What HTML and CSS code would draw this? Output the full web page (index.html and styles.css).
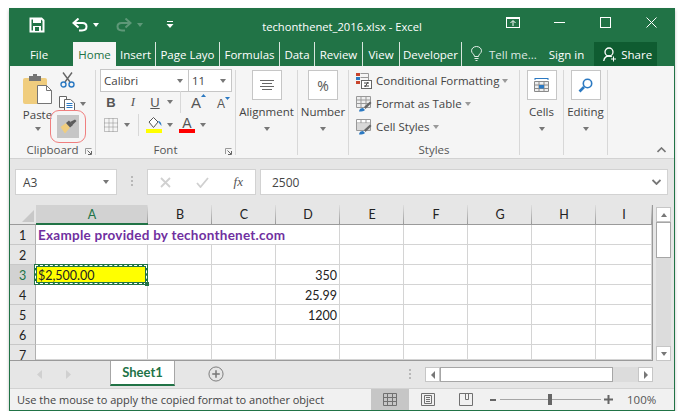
FILE: index.html
```html
<!DOCTYPE html>
<html>
<head>
    <title>techonthenet_2016.xlsx - Excel</title>
    <link rel="stylesheet" href="styles.css">
</head>
<body>
<div class="window">
    <!-- Title bar -->
    <div class="titlebar">
        <div class="qat">
            <svg class="qat-save" width="16" height="16" viewBox="0 0 16 16"><path d="M1.500 1.500H12.500L14.500 3.500V14.500H1.500Z" fill="none" stroke="#fff" stroke-width="2"/><rect x="4" y="2" width="8" height="4" fill="#fff"/><rect x="4" y="9" width="8" height="5" fill="#fff"/><rect x="6" y="10" width="4" height="4" fill="#217346"/></svg>
            <svg class="qat-undo" width="16" height="14" viewBox="0 0 16 14"><path d="M2 5H10.500C13 5 14.500 6.600 14.500 8.600C14.500 10.600 13 12.500 10 12.500H7" fill="none" stroke="#fff" stroke-width="2"/><path d="M6.500 0.500L1.500 5L6.500 9.500" fill="none" stroke="#fff" stroke-width="2"/></svg>
            <span class="tri tri-white qat-drop"></span>
            <svg class="qat-redo" width="16" height="14" viewBox="0 0 16 14"><path d="M14 5H5.500C3 5 1.500 6.600 1.500 8.600C1.500 10.600 3 12.500 6 12.500H9" fill="none" stroke="#5e9878" stroke-width="2"/><path d="M9.500 0.500L14.500 5L9.500 9.500" fill="none" stroke="#5e9878" stroke-width="2"/></svg>
            <span class="tri tri-dim qat-drop2"></span>
            <svg class="qat-custom" width="8" height="8" viewBox="0 0 8 8"><rect x="1" y="0" width="6" height="1" fill="#fff"/><path d="M0.500 3H7.500L4 7Z" fill="#fff"/></svg>
        </div>
        <div class="doc-title">techonthenet_2016.xlsx - Excel</div>
        <div class="win-controls">
            <span class="win-btn"><svg width="14" height="11" viewBox="0 0 14 11"><rect x="0.500" y="0.500" width="13" height="10" fill="none" stroke="#fff"/><rect x="0" y="0" width="14" height="2" fill="#fff"/><path d="M7 9V4M4.500 6L7 3.500L9.500 6" fill="none" stroke="#fff"/></svg></span>
            <span class="win-btn"><svg width="11" height="2" viewBox="0 0 11 2"><rect width="11" height="1" fill="#fff"/></svg></span>
            <span class="win-btn"><svg width="11" height="11" viewBox="0 0 11 11"><rect x="0.500" y="0.500" width="10" height="10" fill="none" stroke="#fff"/></svg></span>
            <span class="win-btn"><svg width="11" height="11" viewBox="0 0 11 11"><path d="M0.500 0.500L10.500 10.500M10.500 0.500L0.500 10.500" stroke="#fff"/></svg></span>
        </div>
    </div>

    <!-- Tabs -->
    <div class="tabs">
        <span class="tab tab-file">File</span>
        <span class="tab tab-home">Home</span>
        <span class="tab tab-sep w40">Insert</span>
        <span class="tab tab-sep w64">Page Layo</span>
        <span class="tab tab-sep w60">Formulas</span>
        <span class="tab tab-sep w35">Data</span>
        <span class="tab tab-sep w48">Review</span>
        <span class="tab tab-sep w37">View</span>
        <span class="tab tab-sep w62">Developer</span>
        <svg class="bulb" width="11" height="15" viewBox="0 0 11 15"><path d="M3.500 10.500C3.500 8 0.500 7.500 0.500 4.800C0.500 2.300 2.800 0.500 5.500 0.500C8.200 0.500 10.500 2.300 10.500 4.800C10.500 7.500 7.500 8 7.500 10.500ZM3.500 12.500H7.500M4.500 14.500H6.500" fill="none" stroke="#e4eee8"/></svg>
        <span class="tell">Tell me...</span>
        <span class="signin">Sign in</span>
        <span class="share">
            <svg width="14" height="15" viewBox="0 0 14 15"><circle cx="6" cy="5" r="4" fill="none" stroke="#fff" stroke-width="1.300"/><path d="M0.700 14C1.200 11 3 9 6 9C7 9 8 9.300 8.800 9.800" fill="none" stroke="#fff" stroke-width="1.300"/><path d="M10.500 9.500V14.500M8 12H13" stroke="#fff"/></svg>
            Share
        </span>
    </div>

    <!-- Ribbon -->
    <div class="ribbon">
        <div class="group g-clip">
            <div class="group-body clip-body">
                <div class="paste">
                    <svg width="29" height="30" viewBox="0 0 29 30"><rect x="0" y="4" width="24" height="26" rx="2" fill="#f0cd7e"/><rect x="6" y="2" width="12" height="5" fill="#757575"/><rect x="10" y="0" width="4" height="3" fill="#757575"/><path d="M14.500 11.500H23.500L28.500 16.500V29.500H14.500Z" fill="#fff" stroke="#757575"/><path d="M23.500 11.500V16.500H28.500" fill="none" stroke="#757575"/></svg>
                    <span class="big-label">Paste</span>
                    <span class="tri tri-gray"></span>
                </div>
                <div class="clip-small">
                    <svg class="cut" width="15" height="16" viewBox="0 0 15 16"><path d="M3 0.500L10 10M12 0.500L5 10" stroke="#666" stroke-width="1.400" fill="none"/><circle cx="3.500" cy="12.500" r="2.500" fill="none" stroke="#2b79c2" stroke-width="1.400"/><circle cx="11.500" cy="12.500" r="2.500" fill="none" stroke="#2b79c2" stroke-width="1.400"/></svg>
                    <div class="copy-row">
                        <svg width="16" height="15" viewBox="0 0 16 15"><path d="M0.500 0.500H7.500V11.500H0.500Z" fill="#fff" stroke="#666"/><path d="M5.500 3.500H11.500L15.500 7V14.500H5.500Z" fill="#fff" stroke="#666"/><path d="M7.500 7.500H13.500M7.500 9.500H13.500M7.500 11.500H13.500" stroke="#2b79c2"/></svg>
                        <span class="tri tri-gray"></span>
                    </div>
                    <div class="painter-ring">
                        <div class="painter">
                            <svg width="17" height="15" viewBox="0 0 17 15"><path d="M0.500 8L6 4L10 8.500L5 14.500Z" fill="#f0cd7e"/><path d="M6 4L9 1.500L13 6L10 8.500Z" fill="#5c5c5c"/><path d="M10 3L15 0.500L16.500 2L12.500 6Z" fill="#5c5c5c"/></svg>
                        </div>
                    </div>
                </div>
            </div>
            <div class="group-label">Clipboard<svg class="launcher" width="7" height="7" viewBox="0 0 7 7"><path d="M0.500 6V0.500H6.500" fill="none" stroke="#999"/><path d="M2.500 2.500L6 6M6.500 3V6.500H3" fill="none" stroke="#666"/></svg></div>
        </div>

        <div class="group g-font">
            <div class="group-body font-body">
                <div class="font-selects">
                    <span class="select font-name">Calibri<span class="tri tri-gray"></span></span>
                    <span class="select font-size">11<span class="tri tri-gray"></span></span>
                </div>
                <div class="font-row row-b">
                    <b class="fmt fmt-b">B</b>
                    <i class="fmt fmt-i">I</i>
                    <u class="fmt fmt-u">U</u>
                    <span class="tri tri-gray"></span>
                    <span class="v-sep"></span>
                    <span class="grow-a">A<svg width="5" height="3" viewBox="0 0 5 3"><path d="M0 3H5L2.500 0Z" fill="#2b79c2"/></svg></span>
                    <span class="shrink-a">A<svg width="5" height="3" viewBox="0 0 5 3"><path d="M0 0H5L2.500 3Z" fill="#2b79c2"/></svg></span>
                </div>
                <div class="font-row row-c">
                    <svg class="borders" width="14" height="14" viewBox="0 0 14 14"><path d="M0.500 0.500H13.500V13.500H0.500ZM5 0.500V13.500M9 0.500V13.500M0.500 5H13.500M0.500 9H13.500" fill="none" stroke="#8a8a8a" stroke-dasharray="1 1"/></svg>
                    <span class="tri tri-gray"></span>
                    <span class="v-sep"></span>
                    <span class="fill-ic">
                        <svg width="16" height="12" viewBox="0 0 16 12"><path d="M3 5L7.500 0.500L12 5L7.500 10.500Z" fill="#fff" stroke="#555"/><path d="M12 4C14 4 15.500 5.500 15.500 9L13 6Z" fill="#2b79c2"/></svg>
                        <span class="bar bar-yellow"></span>
                    </span>
                    <span class="tri tri-gray"></span>
                    <span class="color-a">A<span class="bar bar-red"></span></span>
                    <span class="tri tri-gray"></span>
                </div>
            </div>
            <div class="group-label">Font<svg class="launcher" width="7" height="7" viewBox="0 0 7 7"><path d="M0.500 6V0.500H6.500" fill="none" stroke="#999"/><path d="M2.500 2.500L6 6M6.500 3V6.500H3" fill="none" stroke="#666"/></svg></div>
        </div>

        <div class="group g-align">
            <div class="group-body big-body">
                <span class="big-btn"><svg width="14" height="11" viewBox="0 0 14 11"><path d="M0 0.500H14M2 3.500H12M0 6.500H14M2 9.500H12" stroke="#666"/></svg></span>
                <span class="big-label">Alignment</span>
                <span class="tri tri-gray"></span>
            </div>
        </div>

        <div class="group g-number">
            <div class="group-body big-body">
                <span class="big-btn pct">%</span>
                <span class="big-label">Number</span>
                <span class="tri tri-gray"></span>
            </div>
        </div>

        <div class="group g-styles">
            <div class="group-body styles-body">
                <div class="style-row">
                    <svg width="16" height="16" viewBox="0 0 16 16"><rect x="0" y="0" width="4" height="3" fill="#c8452c"/><rect x="0" y="4" width="4" height="3" fill="#2b79c2"/><rect x="0" y="8" width="4" height="3" fill="#c8452c"/><path d="M4.500 0.500H12.500V8M4.500 4.500H12.500" fill="none" stroke="#999"/><rect x="5.500" y="7.500" width="10" height="8" fill="#fff" stroke="#666"/><path d="M8 10H13M8 13H13M12 9L9 14" stroke="#444" fill="none"/></svg>
                    <span>Conditional Formatting</span><span class="tri tri-gray"></span>
                </div>
                <div class="style-row">
                    <svg width="16" height="16" viewBox="0 0 16 16"><path d="M0.500 0.500H14.500V11.500H0.500ZM0.500 4H14.500M0.500 7.500H14.500M5 0.500V11.500M10 0.500V11.500" fill="#eee" stroke="#999"/><path d="M3 15.500C3 13 5 12 7 12L9 14C8 15.500 6 15.500 3 15.500Z" fill="#2b79c2"/><path d="M8 11L14 5.500L15.500 7L9.500 13Z" fill="#666"/></svg>
                    <span>Format as Table</span><span class="tri tri-gray"></span>
                </div>
                <div class="style-row">
                    <svg width="16" height="16" viewBox="0 0 16 16"><path d="M0.500 0.500H14.500V11.500H0.500ZM0.500 4H14.500M5 0.500V4M10 0.500V4" fill="#fff" stroke="#999"/><rect x="1" y="4.500" width="13" height="6.500" fill="#d8d8d8"/><path d="M3 15.500C3 13 5 12 7 12L9 14C8 15.500 6 15.500 3 15.500Z" fill="#2b79c2"/><path d="M8 11L14 5.500L15.500 7L9.500 13Z" fill="#666"/></svg>
                    <span>Cell Styles</span><span class="tri tri-gray"></span>
                </div>
            </div>
            <div class="group-label">Styles</div>
        </div>

        <div class="group g-cells">
            <div class="group-body big-body">
                <span class="big-btn"><svg width="15" height="15" viewBox="0 0 15 15"><path d="M1 0.500H14M1 0V2M14 0V2" stroke="#2b79c2"/><path d="M0.500 3.500H14.500V13.500H0.500ZM0.500 7H14.500M0.500 10.500H14.500M5 3.500V13.500M10 3.500V13.500" fill="#eee" stroke="#8a8a8a"/><rect x="5" y="7" width="5" height="3.500" fill="#2b79c2"/></svg></span>
                <span class="big-label">Cells</span>
                <span class="tri tri-gray"></span>
            </div>
        </div>

        <div class="group g-edit">
            <div class="group-body big-body">
                <span class="big-btn"><svg width="15" height="15" viewBox="0 0 15 15"><circle cx="9.500" cy="5.500" r="4.200" fill="#fff" stroke="#2b79c2" stroke-width="1.600"/><path d="M6 9L1.500 13.500" stroke="#2b79c2" stroke-width="2.600"/></svg></span>
                <span class="big-label">Editing</span>
                <span class="tri tri-gray"></span>
            </div>
        </div>

        <div class="collapse"><svg width="9" height="6" viewBox="0 0 9 6"><path d="M0.500 5L4.500 1L8.500 5" fill="none" stroke="#777" stroke-width="1.600"/></svg></div>
    </div>

    <!-- Formula bar -->
    <div class="formula-bar">
        <div class="namebox"><span>A3</span><span class="tri tri-gray"></span></div>
        <span class="grip"></span>
        <div class="fx-buttons">
            <svg width="11" height="11" viewBox="0 0 11 11"><path d="M1 1L10 10M10 1L1 10" stroke="#d0d0d0" stroke-width="1.800"/></svg>
            <svg width="13" height="11" viewBox="0 0 13 11"><path d="M1 6L4.500 10L12 1" fill="none" stroke="#d0d0d0" stroke-width="1.800"/></svg>
            <i class="fx-label">fx</i>
        </div>
        <div class="formula-input"><span>2500</span><svg width="9" height="6" viewBox="0 0 9 6"><path d="M0.500 1L4.500 5L8.500 1" fill="none" stroke="#777" stroke-width="1.800"/></svg></div>
    </div>

    <!-- Sheet -->
    <div class="sheet-area">
        <div class="sheet">
            <div class="corner"><span class="corner-tri"></span></div>
            <div class="ch active-ch">A</div><div class="ch">B</div><div class="ch">C</div><div class="ch">D</div><div class="ch">E</div><div class="ch">F</div><div class="ch">G</div><div class="ch">H</div><div class="ch">I</div>

            <div class="rh">1</div><div class="c title-cell">Example provided by techonthenet.com</div><div class="c"></div><div class="c"></div><div class="c"></div><div class="c"></div><div class="c"></div>
            <div class="rh">2</div><div class="c"></div><div class="c"></div><div class="c"></div><div class="c"></div><div class="c"></div><div class="c"></div><div class="c"></div><div class="c"></div><div class="c"></div>
            <div class="rh active-rh">3</div><div class="c selected">$2,500.00<span class="sel-handle"></span></div><div class="c"></div><div class="c"></div><div class="c num">350</div><div class="c"></div><div class="c"></div><div class="c"></div><div class="c"></div><div class="c"></div>
            <div class="rh">4</div><div class="c"></div><div class="c"></div><div class="c"></div><div class="c num">25.99</div><div class="c"></div><div class="c"></div><div class="c"></div><div class="c"></div><div class="c"></div>
            <div class="rh">5</div><div class="c"></div><div class="c"></div><div class="c"></div><div class="c num">1200</div><div class="c"></div><div class="c"></div><div class="c"></div><div class="c"></div><div class="c"></div>
            <div class="rh">6</div><div class="c"></div><div class="c"></div><div class="c"></div><div class="c"></div><div class="c"></div><div class="c"></div><div class="c"></div><div class="c"></div><div class="c"></div>
            <div class="rh rh-cut">7</div><div class="c"></div><div class="c"></div><div class="c"></div><div class="c"></div><div class="c"></div><div class="c"></div><div class="c"></div><div class="c"></div><div class="c"></div>
        </div>
        <div class="vscroll">
            <span class="sb-btn sb-up"><span class="tri tri-up"></span></span>
            <span class="vthumb"></span>
            <span class="sb-track"></span>
            <span class="sb-btn sb-down"><span class="tri tri-gray"></span></span>
        </div>
    </div>

    <!-- Sheet tabs -->
    <div class="tabbar">
        <div class="sheet-nav">
            <svg width="5" height="9" viewBox="0 0 5 9"><path d="M5 0V9L0 4.500Z" fill="#d0d0d0"/></svg>
            <svg width="5" height="9" viewBox="0 0 5 9"><path d="M0 0V9L5 4.500Z" fill="#d0d0d0"/></svg>
        </div>
        <div class="sheet-tab">Sheet1</div>
        <svg class="add-sheet" width="16" height="16" viewBox="0 0 17 17"><circle cx="8.500" cy="8.500" r="7.500" fill="none" stroke="#777"/><path d="M8.500 4.500V12.500M4.500 8.500H12.500" stroke="#777" stroke-width="1.600"/></svg>
        <span class="grip tab-grip"></span>
        <div class="hscroll">
            <span class="sb-btn"><span class="arrow arrow-left"></span></span>
            <span class="hthumb"></span>
            <span class="sb-track"></span>
            <span class="sb-btn"><span class="arrow arrow-right"></span></span>
        </div>
    </div>

    <!-- Status bar -->
    <div class="statusbar">
        <span class="status-text">Use the mouse to apply the copied format to another object</span>
        <span class="view-btn view-on"><svg width="14" height="13" viewBox="0 0 14 13"><path d="M0.500 0.500H13.500V12.500H0.500ZM0.500 4.500H13.500M0.500 8.500H13.500M4.500 0.500V12.500M9.500 0.500V12.500" fill="none" stroke="#707070"/></svg></span>
        <span class="view-btn"><svg width="14" height="13" viewBox="0 0 14 13"><path d="M0.500 0.500H13.500V12.500H0.500Z" fill="none" stroke="#707070"/><path d="M3.500 2.500H10.500V10.500H3.500ZM5 4.500H9M5 6.500H9M5 8.500H9" fill="none" stroke="#707070"/></svg></span>
        <span class="view-btn"><svg width="14" height="13" viewBox="0 0 14 13"><path d="M0.500 0.500H13.500V12.500H0.500ZM6.500 0.500V6.500H9.500V0.500" fill="none" stroke="#707070"/></svg></span>
        <div class="zoom">
            <span class="zoom-minus"></span>
            <span class="zoom-track"><span class="zoom-thumb"></span></span>
            <svg width="9" height="9" viewBox="0 0 9 9"><path d="M4.500 0V9M0 4.500H9" stroke="#666" stroke-width="2"/></svg>
        </div>
        <span class="zoom-pct">100%</span>
    </div>
</div>
</body>
</html>
```

FILE: styles.css
```css
body {
    margin: 0;
    background: #fff;
    font-family: "Open Sans", "Noto Sans", sans-serif;
    font-size: 11.5px;
    color: #444;
}

svg {
    display: block;
    flex: none;
}

.window {
    box-sizing: border-box;
    width: 666px;
    height: 403px;
    margin: 8px 0 0 9px;
    border: 1px solid #217346;
    border-top: none;
    display: flex;
    flex-direction: column;
    box-shadow: 0 2px 3px rgba(0, 0, 0, 0.25);
    overflow: hidden;
}

/* small dropdown triangles */
.tri {
    display: inline-block;
    flex: none;
    width: 0;
    height: 0;
    border-left: 3.5px solid transparent;
    border-right: 3.5px solid transparent;
    border-top: 4px solid #777;
}

.tri-white { border-top-color: #fff; }
.tri-dim { border-top-color: #5e9878; }
.tri-up {
    border-top: none;
    border-bottom: 4px solid #777;
}

/* title bar */
.titlebar {
    height: 34px;
    background: #217346;
    display: grid;
    grid-template-columns: 1fr auto 1fr;
    color: #fff;
}

.qat {
    display: flex;
    align-items: center;
}

.qat-save { margin-left: 19px; }
.qat-undo { margin-left: 27px; }
.qat-drop { margin-left: 5px; }
.qat-redo { margin-left: 17px; }
.qat-drop2 { margin-left: 5px; }
.qat-custom { margin-left: 23px; }

.doc-title {
    font-size: 11.2px;
    padding-top: 11px;
}

.win-controls {
    display: flex;
    justify-content: flex-end;
}

.win-btn {
    width: 46px;
    display: flex;
    align-items: center;
    justify-content: center;
    padding-bottom: 5px;
}

/* tabs */
.tabs {
    height: 24px;
    background: #217346;
    display: flex;
    align-items: stretch;
    color: #fff;
    font-size: 11.5px;
}

.tab {
    display: flex;
    align-items: center;
    justify-content: center;
    box-sizing: border-box;
}

.tab-file {
    width: 58px;
    margin-right: 5px;
}

.tab-home {
    width: 43px;
    background: #f5f5f5;
    color: #217346;
}

.tab-sep { border-right: 1px solid #d8e6de; }
.w40 { width: 40px; }
.w64 { width: 64px; }
.w60 { width: 60px; }
.w35 { width: 35px; }
.w48 { width: 48px; }
.w37 { width: 37px; }
.w62 { width: 62px; }

.bulb {
    margin: 4px 0 0 9px;
}

.tell {
    margin-left: 7px;
    align-self: center;
    color: #dfe9e3;
}

.signin {
    margin-left: 12px;
    align-self: center;
}

.share {
    margin-left: 10px;
    width: 63px;
    box-sizing: border-box;
    background: #0f5c31;
    display: flex;
    align-items: center;
    gap: 4px;
    padding-left: 9px;
}

/* ribbon */
.ribbon {
    height: 93px;
    flex: none;
    box-sizing: border-box;
    background: #f5f5f5;
    display: flex;
    border-bottom: 1px solid #d2d2d2;
}

.group {
    box-sizing: border-box;
    height: 85px;
    margin-top: 4px;
    border-right: 1px solid #d8d8d8;
    position: relative;
    display: flex;
    flex-direction: column;
}

.group-body {
    flex: 1;
    min-height: 0;
}

.group-label {
    height: 15px;
    margin-bottom: -3px;
    line-height: 14px;
    text-align: center;
    color: #555;
}

.launcher {
    position: absolute;
    right: 3px;
    bottom: 0;
}

.g-clip { width: 86px; }
.g-font { width: 140px; }
.g-align { width: 62px; }
.g-number { width: 51px; }
.g-styles { width: 171px; }
.g-cells { width: 44px; }
.g-edit { width: 44px; }

.big-label {
    color: #444;
    white-space: nowrap;
}

/* clipboard */
.clip-body {
    display: flex;
}

.paste {
    margin-left: 13px;
    width: 29px;
    display: flex;
    flex-direction: column;
    align-items: center;
}

.paste svg { margin-top: 4px; }
.paste .big-label { margin-top: 3px; }
.paste .tri { margin-top: 5px; }

.clip-small {
    margin-left: -2px;
    display: flex;
    flex-direction: column;
    align-items: flex-start;
}

.cut { margin-left: 10px; margin-top: 2px; }

.copy-row {
    margin: 8px 0 0 9px;
    display: flex;
    align-items: center;
    gap: 5px;
}

.painter-ring {
    box-sizing: border-box;
    width: 36px;
    height: 33px;
    margin-top: -1px;
    border: 1.500px solid #f07f7f;
    border-radius: 9px;
    display: flex;
    align-items: center;
    justify-content: center;
}

.painter {
    width: 22px;
    height: 23px;
    background: #c6c6c6;
    display: flex;
    align-items: center;
    justify-content: center;
}

/* font */
.font-body {
    padding: 0 0 0 4px;
}

.font-selects {
    display: flex;
    margin-top: -1px;
}

.select {
    box-sizing: border-box;
    height: 23px;
    background: #fff;
    border: 1px solid #c6c6c6;
    display: flex;
    align-items: center;
    justify-content: space-between;
    padding: 0 5px 0 3px;
}

.font-name { width: 88px; border-right: none; }
.font-size { width: 44px; }

.font-row {
    display: flex;
    align-items: center;
}

.row-b {
    height: 20px;
}

.row-c {
    height: 22px;
    margin-top: 2px;
}

.fmt {
    width: 12px;
    text-align: center;
    font-size: 13px;
    color: #555;
    font-family: "Liberation Sans", sans-serif;
}

.fmt-b { margin-left: 5px; }
.fmt-i { margin-left: 10px; font-family: "Liberation Serif", serif; }
.fmt-u { margin-left: 10px; }
.row-b .tri { margin-left: 6px; }

.v-sep {
    width: 1px;
    height: 22px;
    background: #d8d8d8;
}

.row-b .v-sep { margin-left: 7px; }
.row-c .v-sep { margin-left: 8px; }

.grow-a, .shrink-a {
    color: #555;
    font-family: "Liberation Sans", sans-serif;
    display: flex;
    align-items: flex-start;
}

.grow-a { font-size: 15px; margin-left: 10px; }
.shrink-a { font-size: 12px; margin-left: 11px; padding-top: 3px; }

.borders { margin-left: 4px; }
.row-c .borders + .tri { margin-left: 6px; }

.fill-ic {
    margin-left: 7px;
    width: 16px;
    display: flex;
    flex-direction: column;
}

.row-c .fill-ic + .tri { margin-left: 5px; }

.bar {
    display: block;
    height: 4px;
}

.bar-yellow { background: #ffff00; }
.bar-red { background: #ff0000; width: 16px; }

.color-a {
    margin-left: 6px;
    width: 16px;
    line-height: 12px;
    text-align: center;
    font-size: 14px;
    color: #555;
    font-family: "Liberation Sans", sans-serif;
}

.color-a + .tri { margin-left: 5px; }

/* big buttons */
.big-body {
    display: flex;
    flex-direction: column;
    align-items: center;
}

.big-btn {
    box-sizing: border-box;
    width: 30px;
    height: 30px;
    background: #fff;
    border: 1px solid #c6c6c6;
    display: flex;
    align-items: center;
    justify-content: center;
    margin-bottom: 4px;
}

.big-body .tri { margin-top: 8px; }

.pct {
    font-size: 14px;
    color: #555;
}

/* styles */
.styles-body {
    margin-top: -1px;
    padding-left: 7px;
}

.style-row {
    height: 23px;
    display: flex;
    align-items: center;
    gap: 4px;
}

.style-row .tri {
    margin-left: -1px;
    border-top-color: #999;
}

.collapse {
    margin: 81px 0 0 49px;
}

/* formula bar */
.formula-bar {
    height: 46px;
    flex: none;
    box-sizing: border-box;
    background: #e6e6e6;
    padding: 10px 6px 10px 5px;
    display: flex;
    align-items: stretch;
}

.namebox {
    box-sizing: border-box;
    width: 102px;
    background: #fff;
    border: 1px solid #d2d2d2;
    display: flex;
    align-items: center;
    justify-content: space-between;
    padding: 0 7px;
    font-size: 12px;
}

.grip {
    width: 2px;
    margin: 7px 14px 0;
    height: 10px;
    background: repeating-linear-gradient(#b8b8b8 0 2px, transparent 2px 4px);
}

.fx-buttons {
    box-sizing: border-box;
    width: 109px;
    background: #fff;
    border: 1px solid #d2d2d2;
    display: flex;
    align-items: center;
    padding: 0 12px;
    justify-content: space-between;
}

.fx-label {
    font-family: "Liberation Serif", serif;
    font-size: 13px;
    color: #555;
}

.formula-input {
    flex: 1;
    margin-left: 4px;
    box-sizing: border-box;
    background: #fff;
    border: 1px solid #d2d2d2;
    display: flex;
    align-items: center;
    justify-content: space-between;
    padding: 0 6px 0 11px;
    font-size: 12px;
}

/* sheet */
.sheet-area {
    height: 156px;
    flex: none;
    background: #e6e6e6;
    display: flex;
}

.sheet {
    width: 643px;
    box-sizing: border-box;
    display: grid;
    grid-template-columns: 26px 112px repeat(7, 64px) 56px;
    grid-template-rows: 20px repeat(6, 20px) 15px;
    font-family: "Lato", "Liberation Sans", sans-serif;
    font-size: 12.5px;
    color: #222;
    border-right: 1px solid #9a9a9a;
    border-bottom: 1px solid #9a9a9a;
    overflow: hidden;
}

.corner {
    background: #e6e6e6;
    border-bottom: 1px solid #9a9a9a;
    position: relative;
}

.corner-tri {
    position: absolute;
    right: 2px;
    bottom: 2px;
    border-left: 12px solid transparent;
    border-bottom: 12px solid #c8c8c8;
}

.ch {
    background: linear-gradient(#dedede, #9a9a9a) right / 1px 100% no-repeat #e6e6e6;
    border-bottom: 1px solid #9a9a9a;
    text-align: center;
    line-height: 20px;
}

.active-ch {
    background-color: #d2d2d2;
    color: #217346;
    border-bottom: 2px solid #217346;
}

.rh {
    background: #e6e6e6;
    border-right: 1px solid #b0b0b0;
    border-bottom: 1px solid #c8c8c8;
    text-align: center;
    line-height: 21px;
}

.rh-cut {
    border-bottom: none;
}

.active-rh {
    background: #d2d2d2;
    color: #217346;
}

.c {
    background: #fff;
    border-right: 1px solid #d4d4d4;
    border-bottom: 1px solid #d4d4d4;
    line-height: 21px;
    white-space: nowrap;
    padding: 0 2px;
}

.title-cell {
    grid-column: span 4;
    font-size: 13.5px;
    letter-spacing: 0.25px;
    font-weight: bold;
    color: #7030a0;
}

.num { text-align: right; }

.selected {
    background: #ffff00;
    position: relative;
    overflow: visible;
}

.selected::before {
    content: "";
    position: absolute;
    left: -2px;
    top: -1px;
    right: -1px;
    bottom: -1px;
    border: 3px solid #217346;
}

.selected::after {
    content: "";
    position: absolute;
    left: -1px;
    top: 0;
    right: 0;
    bottom: 0;
    border: 1px dashed #fff;
}

.sel-handle {
    position: absolute;
    right: -2px;
    bottom: -2px;
    width: 4px;
    height: 4px;
    background: #217346;
    z-index: 1;
}

.vscroll {
    width: 15px;
    margin-left: 3px;
    padding-top: 2px;
    display: flex;
    flex-direction: column;
}

.sb-btn {
    box-sizing: border-box;
    background: #fff;
    border: 1px solid #c6c6c6;
    display: flex;
    align-items: center;
    justify-content: center;
    flex: none;
}

.vscroll .sb-btn { height: 15px; }

.vthumb {
    box-sizing: border-box;
    height: 36px;
    background: #fff;
    border: 1px solid #a6a6a6;
}

.sb-track {
    flex: 1;
    background: #dcdcdc;
}

/* tab bar */
.tabbar {
    height: 28px;
    flex: none;
    box-sizing: border-box;
    background: #e6e6e6;
    display: flex;
    align-items: flex-start;
    border-bottom: 1px solid #d2d2d2;
}

.sheet-nav {
    width: 100px;
    height: 26px;
    display: flex;
    align-items: center;
    gap: 24px;
    padding-left: 27px;
    box-sizing: border-box;
}

.sheet-tab {
    box-sizing: border-box;
    width: 65px;
    height: 25px;
    background: #fff;
    border-left: 1px solid #a6a6a6;
    border-right: 1px solid #a6a6a6;
    border-bottom: 2px solid #217346;
    color: #217346;
    font-family: "Lato", sans-serif;
    font-weight: bold;
    font-size: 13px;
    text-align: center;
    line-height: 23px;
}

.add-sheet {
    margin: 5px 0 0 33px;
}

.tab-grip {
    margin: 8px 0 0 185px;
}

.hscroll {
    width: 228px;
    height: 15px;
    margin: 6px 0 0 14px;
    display: flex;
}

.hscroll .sb-btn { width: 15px; }

.hthumb {
    box-sizing: border-box;
    width: 173px;
    background: #fff;
    border: 1px solid #a6a6a6;
}

.arrow {
    width: 0;
    height: 0;
    border-top: 4px solid transparent;
    border-bottom: 4px solid transparent;
}

.arrow-left { border-right: 4px solid #777; }
.arrow-right { border-left: 4px solid #777; }

/* status bar */
.statusbar {
    flex: 1;
    background: #f1f1f1;
    display: flex;
    align-items: stretch;
}

.status-text {
    width: 361px;
    padding-left: 7px;
    box-sizing: border-box;
    font-size: 11px;
    line-height: 21px;
    white-space: nowrap;
    overflow: hidden;
}

.view-btn {
    width: 38px;
    display: flex;
    align-items: center;
    justify-content: center;
}

.view-on { background: #c6c6c6; }

.zoom {
    display: flex;
    align-items: center;
    margin-left: 5px;
}

.zoom-minus {
    width: 6px;
    height: 2px;
    background: #666;
}

.zoom-track {
    width: 101px;
    height: 1px;
    background: #a6a6a6;
    margin: 0 3px 0 4px;
    position: relative;
}

.zoom-thumb {
    position: absolute;
    left: 48px;
    top: -5px;
    width: 4px;
    height: 11px;
    background: #666;
}

.zoom-pct {
    margin-left: 14px;
    line-height: 21px;
    color: #555;
}
```
